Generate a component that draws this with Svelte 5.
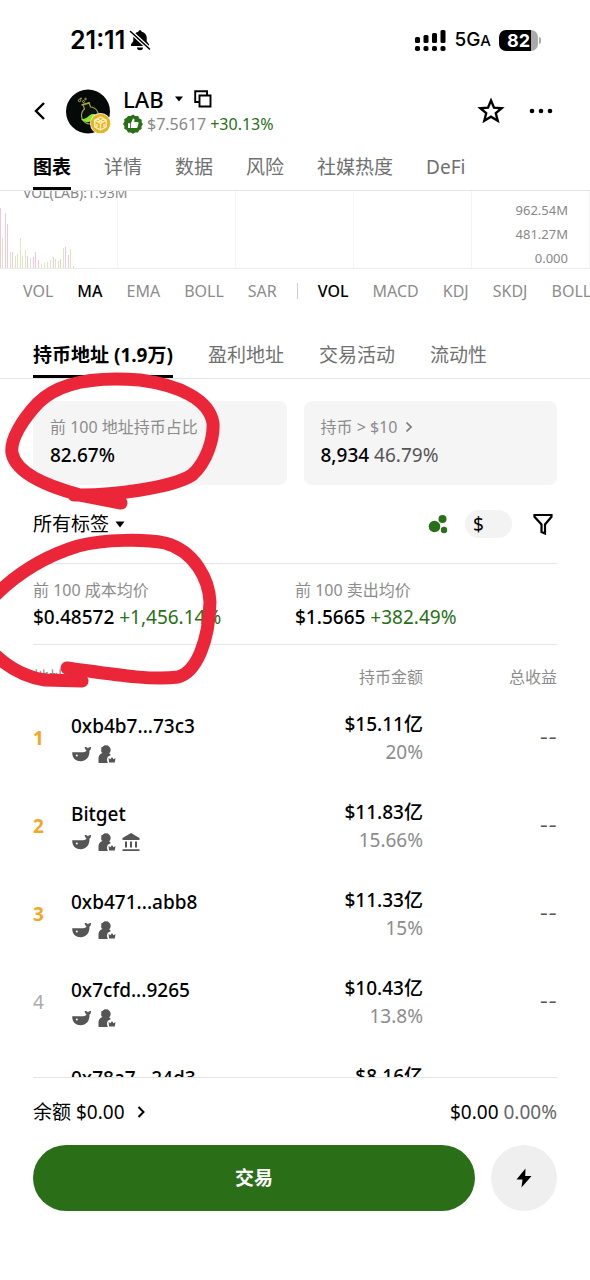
<script lang="ts">
  interface Holder {
    name: string;
    bank?: boolean;
    amount: string;
    share?: string;
  }

  const pageTabs = ["图表", "详情", "数据", "风险", "社媒热度", "DeFi"];
  const mainIndicators = ["VOL", "MA", "EMA", "BOLL", "SAR"];
  const subIndicators = ["VOL", "MACD", "KDJ", "SKDJ", "BOLL"];
  const holderTabs = ["持币地址 (1.9万)", "盈利地址", "交易活动", "流动性"];

  const holders: Holder[] = [
    { name: "0xb4b7...73c3", amount: "$15.11亿", share: "20%" },
    { name: "Bitget", bank: true, amount: "$11.83亿", share: "15.66%" },
    { name: "0xb471...abb8", amount: "$11.33亿", share: "15%" },
    { name: "0x7cfd...9265", amount: "$10.43亿", share: "13.8%" },
    { name: "0x78a7...24d3", amount: "$8.16亿" },
  ];

  // volume bars: [x, height, up]
  const bars: [number, number, boolean][] = [
    [0, 60, false], [2, 30, true], [5, 55, false], [7, 44, false], [10, 16, true],
    [12, 16, false], [15, 12, true], [17, 14, true], [20, 30, true], [22, 12, true],
    [25, 18, true], [27, 12, false], [30, 10, true], [33, 11, false], [35, 16, false],
    [38, 8, false], [41, 4, true], [44, 5, true], [47, 6, true], [50, 8, true],
    [53, 11, false], [55, 9, true], [58, 7, true], [60, 9, false], [63, 20, true],
    [65, 21, false], [68, 13, false], [70, 19, true], [73, 2, false],
  ];

  let pageTab = $state(0);
  let holderTab = $state(0);
  let mainIndicator = $state("MA");
  let subIndicator = $state("VOL");
</script>

<div class="app">
  <div class="status">
    <div class="clock">
      21:11
      <svg width="22" height="22" viewBox="0 0 22 22" aria-hidden="true">
        <path d="M11 1.2c-1 0-1.6.6-1.7 1.5C6.500 3.400 4.300 5.500 4.300 8.500v3.700L2 15.300v1.700h18v-1.700l-2.300-3.100V8.500c0-3-2.200-5.100-5-5.800-.1-.9-.7-1.500-1.700-1.500z" />
        <path d="M8 18.600a3 2.600 0 0 0 6 0z" />
        <path d="M1.500 2.500l19 17.500" stroke="#fff" stroke-width="4" />
        <path d="M1.500 2.500l19 17.500" stroke="#000" stroke-width="1.600" stroke-linecap="round" />
      </svg>
    </div>
    <div class="signal">
      <svg width="31" height="22" viewBox="0 0 31 22" aria-hidden="true">
        <rect x="0" y="8" width="5" height="6" rx="1.500" />
        <rect x="8.500" y="6" width="5" height="8" rx="1.500" />
        <rect x="17" y="4" width="5" height="10" rx="1.500" />
        <rect x="25.500" y="1" width="5" height="13" rx="1.500" />
        <rect x="0" y="17" width="5" height="5" rx="1.800" />
        <rect x="8.500" y="17" width="5" height="5" rx="1.800" />
        <rect x="17" y="17" width="5" height="5" rx="1.800" />
        <rect x="25.500" y="17" width="5" height="5" rx="1.800" />
      </svg>
      <span class="network">5G<small>A</small></span>
      <span class="battery">82</span>
    </div>
  </div>

  <header>
    <button class="back" aria-label="返回">
      <svg width="14" height="20" viewBox="0 0 14 20"><path d="M11 2L3 10l8 8" fill="none" stroke="#000" stroke-width="2.400" /></svg>
    </button>
    <svg class="coin" width="45" height="45" viewBox="0 0 45 45" aria-hidden="true">
      <circle cx="22" cy="22.500" r="22" fill="#050a08" />
      <path d="M17 15.500l1.500 4.500a8.500 8.500 0 1 0 6-2l-1.300-4z" fill="#0b120c" stroke="#a8a63c" stroke-width="1.100" />
      <path d="M15 30c4 .5 6-1.500 8.500-3.500 2.500-1.800 4-1.500 6.200-1a8.300 8.300 0 0 1-14.700 4.500z" fill="#8aea2e" />
      <path d="M15.500 16l8.500-2.300" stroke="#a8a63c" stroke-width="1.500" />
      <g fill="none" stroke="#b6b04a"><circle cx="13.500" cy="11.500" r="1.200" /><circle cx="17.500" cy="12.500" r="1" /><circle cx="15" cy="9.500" r=".6" /><circle cx="19.500" cy="10" r=".8" /></g>
      <circle cx="34.500" cy="34.500" r="10.500" fill="#fff" />
      <circle cx="34.500" cy="34.500" r="9.800" fill="#e6b325" />
      <path d="M34.500 28l5.700 3.200v6.600L34.500 41l-5.700-3.200v-6.600z M29.500 31.500l5 3 5-3 M34.500 34.500v6 M31.500 30l6 3.500 M37.500 30l-6 3.500 M31 35v3 M38 35v3" fill="none" stroke="#fff3c4" stroke-width="1.400" />
    </svg>
    <div class="token">
      <div class="symbol">
        <h1>LAB</h1>
        <svg width="10" height="6" viewBox="0 0 10 6" aria-hidden="true"><path d="M1 .5h8L5 5.500z" /></svg>
        <button aria-label="复制">
          <svg width="18" height="18" viewBox="0 0 18 18"><path d="M5 12H1.200V1.200H13V5M5.500 5.500h11v11h-11z" fill="none" stroke="#000" stroke-width="1.900" /></svg>
        </button>
      </div>
      <div class="price">
        <svg width="20" height="20" viewBox="0 0 20 20" aria-hidden="true">
          <path d="M10 .5l2.300 1.600 2.800-.2 1.200 2.500 2.500 1.300-.2 2.700L20 10l-1.500 2.200.1 2.700-2.400 1.300-1.300 2.400-2.700-.1L10 19.800l-2.300-1.400-2.700.1-1.300-2.400-2.400-1.300.1-2.700L0 10l1.400-2.300-.1-2.700 2.400-1.300L5 1.900l2.700.2z" fill="#287017" />
          <path d="M5 9.200h2.200V14H5z M8 9l2-4.500c1.300 0 1.700.8 1.500 1.800L11.200 8h3.300c.8 0 1.100.6 1 1.200l-.9 3.900c-.2.600-.6.900-1.200.9H8z" fill="#fff" />
        </svg>
        <span>$7.5617</span>
        <span class="up">+30.13%</span>
      </div>
    </div>
    <div class="actions">
      <button aria-label="收藏">
        <svg width="28" height="28" viewBox="0 0 28 28"><path d="M14 3.500l3 7.100 7.700.6-5.900 5 1.900 7.600L14 19.700l-6.700 4.100 1.900-7.600-5.900-5 7.700-.6z" fill="none" stroke="#000" stroke-width="2.400" /></svg>
      </button>
      <button aria-label="更多">
        <svg width="24" height="6" viewBox="0 0 24 6"><circle cx="3" cy="3" r="2.300" /><circle cx="12" cy="3" r="2.300" /><circle cx="21" cy="3" r="2.300" /></svg>
      </button>
    </div>
  </header>

  <nav class="tabs">
    {#each pageTabs as tab, i}
      <button class:active={pageTab === i} onclick={() => (pageTab = i)}>{tab}</button>
    {/each}
  </nav>

  <section class="chart">
    <div class="legend">VOL(LAB):1.93M</div>
    <svg width="80" height="76" viewBox="0 0 80 76" aria-hidden="true">
      {#each bars as [x, height, up]}
        <rect {x} y={76 - height} width="1" {height} fill={up ? "#dbe8bd" : "#f3c6dc"} />
      {/each}
    </svg>
    <div class="axis">
      <span>962.54M</span>
      <span>481.27M</span>
      <span>0.000</span>
    </div>
  </section>

  <div class="indicators">
    {#each mainIndicators as name}
      <button class:active={mainIndicator === name} onclick={() => (mainIndicator = name)}>{name}</button>
    {/each}
    <i></i>
    {#each subIndicators as name}
      <button class:active={subIndicator === name} onclick={() => (subIndicator = name)}>{name}</button>
    {/each}
  </div>

  <nav class="tabs holder-tabs">
    {#each holderTabs as tab, i}
      <button class:active={holderTab === i} onclick={() => (holderTab = i)}>{tab}</button>
    {/each}
  </nav>

  <div class="cards">
    <div class="card">
      <div class="label">前 100 地址持币占比</div>
      <div class="value">82.67%</div>
    </div>
    <div class="card">
      <div class="label">
        持币 &gt; $10
        <svg width="8" height="12" viewBox="0 0 8 12" aria-hidden="true"><path d="M1.500 1.500L6 6l-4.500 4.500" fill="none" stroke="#777" stroke-width="1.700" /></svg>
      </div>
      <div class="value">8,934 <span>46.79%</span></div>
    </div>
  </div>

  <div class="filters">
    <button class="all">
      所有标签
      <svg width="10" height="7" viewBox="0 0 10 7" aria-hidden="true"><path d="M.5.5h9L5 6.500z" /></svg>
    </button>
    <button aria-label="气泡图">
      <svg width="20" height="20" viewBox="0 0 20 20" fill="#287017"><circle cx="6.500" cy="12.500" r="5.800" /><circle cx="14.500" cy="5" r="4" /><circle cx="16" cy="16" r="3.200" /></svg>
    </button>
    <button class="switch" aria-label="货币单位">$</button>
    <button aria-label="筛选">
      <svg width="20" height="22" viewBox="0 0 20 22"><path d="M1.500 2h17v1.800L12 11.500V20.500L8.500 19v-7.500L1.500 3.800z" fill="none" stroke="#000" stroke-width="2.200" /></svg>
    </button>
  </div>

  <div class="averages">
    <div>
      <div class="label">前 100 成本均价</div>
      <div class="value">$0.48572 <span class="up">+1,456.14%</span></div>
    </div>
    <div>
      <div class="label">前 100 卖出均价</div>
      <div class="value">$1.5665 <span class="up">+382.49%</span></div>
    </div>
  </div>

  <main>
    <table>
      <thead>
        <tr>
          <th class="name" colspan="2">地址</th>
          <th>持币金额</th>
          <th class="profit">总收益</th>
        </tr>
      </thead>
      <tbody>
        {#each holders as holder, i}
          <tr>
            <td class="rank" class:top={i < 3}>{i + 1}</td>
            <td class="name">
              <div class="address">{holder.name}</div>
              <div class="badges">
                <svg width="20" height="20" viewBox="0 0 20 20" aria-hidden="true">
                  <path d="M1.200 8.200H12c2 0 3-.8 3.600-2-1.200-.5-1.900-1.500-1.900-3.200 1.600 0 2.700.3 3.300 1.400.7-1.100 1.600-1.600 3-1.500 0 2-.4 3-1.500 3.600.2 5.700-2.500 10.700-9 10.700-5.400 0-8.300-3.500-8.300-9z" />
                  <circle cx="5.800" cy="11.500" r="1" fill="#fff" />
                </svg>
                <svg width="20" height="20" viewBox="0 0 20 20" aria-hidden="true">
                  <circle cx="10" cy="6" r="4.700" />
                  <path d="M5.500 3h4v5l-4 .5z" />
                  <path d="M2.500 19v-4.500c0-3 2-5.500 5-5.500h4c1.500 0 2.700.9 3.300 2.300-2.500.6-3.800 2.200-3.800 4.200 0 1.500.4 2.500 1 3.500z" />
                  <path d="M12.500 14l2 1.300L16 13l1.500 2.300 2-1.300-.7 4.500h-5.600z" />
                </svg>
                {#if holder.bank}
                  <svg width="20" height="20" viewBox="0 0 20 20" aria-hidden="true">
                    <path d="M10 1l8.500 5v2h-17V6z M4 9.500h2v6H4z M9 9.500h2v6H9z M14 9.500h2v6h-2z M1.500 17.300h17V19h-17z" />
                  </svg>
                {/if}
              </div>
            </td>
            <td class="amount">
              <div>{holder.amount}</div>
              <div class="share">{holder.share ?? ""}</div>
            </td>
            <td class="profit">--</td>
          </tr>
        {/each}
      </tbody>
    </table>
  </main>

  <footer>
    <div class="balance">
      <button>
        余额 $0.00
        <svg width="9" height="14" viewBox="0 0 9 14" aria-hidden="true"><path d="M1.500 2L6.500 7l-5 5" fill="none" stroke="#000" stroke-width="2" /></svg>
      </button>
      <div>$0.00 <span>0.00%</span></div>
    </div>
    <div class="trade">
      <button class="primary">交易</button>
      <button class="flash" aria-label="闪电交易">
        <svg width="18" height="20" viewBox="0 0 18 20"><path d="M10.500.5L1.500 11.500h6L6.500 19.500l10-11.500h-6.300z" /></svg>
      </button>
    </div>
  </footer>

  <!-- hand-drawn marker rings -->
  <svg class="marker" width="590" height="1280" viewBox="0 0 590 1280" aria-hidden="true">
    <path d="M74 495C110 496 172 488 192 475C207 462 214 438 213 423C209 399 178 385 140 380C92 376 58 383 38 403C22 420 10 440 12 453C16 474 50 487 80 495L121 503" />
    <path d="M-14 605C10 578 42 557 78 546C105 539 145 539 165 543C195 551 209 580 210 602C209 640 197 672 178 677C150 681 105 673 67 668" />
    <path d="M-14 645C2 664 20 676 45 680L82 681" />
  </svg>
</div>

<style>
  .app {
    position: relative;
    display: flex;
    flex-direction: column;
    height: 100vh;
    overflow: hidden;
    background: #fff;
    color: #000;
    font-family: "Noto Sans", "Noto Sans CJK SC", sans-serif;
    font-size: 19px;
    line-height: 28px;
  }
  button {
    padding: 0;
    border: 0;
    background: none;
    color: inherit;
    font: inherit;
    white-space: nowrap;
    cursor: pointer;
  }
  svg {
    display: block;
    flex: none;
  }
  .up {
    color: #287017;
  }

  .status {
    display: flex;
    flex: none;
    align-items: center;
    justify-content: space-between;
    height: 80px;
    padding: 0 52px 0 70px;
    font-family: Inter, sans-serif;
    font-weight: 600;
  }
  .clock,
  .signal {
    display: flex;
    align-items: center;
  }
  .clock {
    gap: 4px;
    font-size: 25px;
  }
  .signal {
    gap: 8px;
  }
  .network {
    font-weight: 500;
  }
  .network small {
    font-size: 15px;
  }
  .battery {
    position: relative;
    width: 39px;
    border-radius: 7px;
    background: linear-gradient(to right, #000 82%, #aaa 82%);
    color: #fff;
    font-size: 18px;
    font-weight: 700;
    line-height: 21px;
    text-align: center;
  }
  .battery::after {
    content: "";
    position: absolute;
    top: 7px;
    right: -3px;
    width: 2px;
    height: 7px;
    border-radius: 0 2px 2px 0;
    background: #aaa;
  }

  header {
    display: flex;
    flex: none;
    align-items: center;
    height: 62px;
    padding: 0 37px 0 33px;
  }
  .coin {
    margin: 0 12px 0 19px;
  }
  .symbol,
  .price,
  .actions {
    display: flex;
    align-items: center;
  }
  .symbol {
    gap: 10px;
    height: 26px;
  }
  h1 {
    margin: 0;
    font-size: 22px;
    font-weight: 500;
  }
  .price {
    gap: 4px;
    height: 24px;
    color: #888;
    font-size: 16px;
  }
  .price .up {
    color: #287017;
  }
  .actions {
    gap: 24px;
    margin-left: auto;
  }

  .tabs {
    display: flex;
    flex: none;
    gap: 33px;
    height: 48px;
    padding: 0 33px;
    border-bottom: 1px solid #e5e5e5;
    color: #707070;
  }
  .tabs button {
    padding-top: 4px;
    border-bottom: 3px solid transparent;
  }
  .tabs .active {
    border-color: #000;
    color: #000;
    font-weight: 700;
  }

  .chart {
    position: relative;
    display: flex;
    flex: none;
    align-items: flex-end;
    justify-content: space-between;
    height: 77px;
    border-bottom: 1px solid #ececec;
    overflow: hidden;
    background: repeating-linear-gradient(to right, transparent 0 117px, #f4f4f4 117px 118px);
    color: #888;
    font-size: 14px;
  }
  .legend {
    position: absolute;
    top: -12px;
    left: 23px;
  }
  .axis {
    display: flex;
    flex-direction: column;
    align-self: flex-start;
    padding: 7px 22px 0 0;
    font-size: 13px;
    line-height: 24px;
    text-align: right;
  }

  .indicators {
    display: flex;
    flex: none;
    align-items: center;
    gap: 24px;
    height: 44px;
    padding-left: 23px;
    overflow: hidden;
    color: #8c8c8c;
    font-size: 16px;
  }
  .indicators .active {
    color: #000;
    font-weight: 500;
  }
  .indicators i {
    flex: none;
    width: 1px;
    height: 16px;
    margin: 0 -4px;
    background: #ccc;
  }
  .holder-tabs {
    gap: 35px;
    margin-top: 17px;
  }

  .cards {
    display: flex;
    flex: none;
    gap: 17px;
    padding: 22px 33px 0;
  }
  .card {
    flex: 1;
    padding: 12px 17px 16px;
    border-radius: 8px;
    background: #f5f5f5;
  }
  .label {
    display: flex;
    align-items: center;
    gap: 8px;
    color: #8c8c8c;
    font-size: 16px;
  }
  .value {
    font-weight: 500;
    white-space: nowrap;
  }
  .value span {
    color: #555;
    font-weight: 400;
  }
  .value .up {
    color: #287017;
  }

  .filters {
    display: flex;
    flex: none;
    align-items: center;
    gap: 17px;
    height: 78px;
    padding: 0 37px 0 33px;
  }
  .all {
    display: flex;
    align-items: center;
    gap: 6px;
    margin-right: auto;
  }
  .switch {
    width: 47px;
    padding-left: 8px;
    border-radius: 14px;
    background: #f3f3f3;
    text-align: left;
  }
  .filters button:last-child {
    margin-left: 4px;
  }

  .averages {
    display: grid;
    flex: none;
    grid-template-columns: 1fr 1fr;
    margin: 0 33px;
    padding: 12px 0 14px;
    border: solid #e5e5e5;
    border-width: 1px 0;
  }
  .averages .value {
    line-height: 26px;
  }

  main {
    flex: 1;
    min-height: 0;
    padding: 0 33px;
    overflow: hidden;
  }
  table {
    width: 100%;
    border-collapse: collapse;
  }
  th,
  td {
    padding: 0;
    text-align: right;
  }
  th {
    box-sizing: border-box;
    height: 49px;
    padding-top: 20px;
    color: #8c8c8c;
    font-size: 16px;
    font-weight: 400;
    line-height: 24px;
    vertical-align: top;
  }
  td {
    box-sizing: border-box;
    height: 88px;
  }
  .name {
    text-align: left;
  }
  td.name {
    padding-top: 4px;
  }
  .rank {
    width: 38px;
    color: #aaa;
    text-align: left;
  }
  .rank.top {
    color: #f5a623;
    font-weight: 700;
  }
  .address,
  .amount {
    font-weight: 500;
  }
  .badges {
    display: flex;
    gap: 5px;
    height: 28px;
    align-items: center;
    fill: #555;
  }
  .share {
    min-height: 28px;
    color: #8c8c8c;
    font-weight: 400;
  }
  .profit {
    width: 134px;
  }
  td.profit {
    color: #555;
    font-family: Inter, sans-serif;
  }

  footer {
    flex: none;
    margin: 0 33px;
    padding-bottom: 69px;
    border-top: 1px solid #e5e5e5;
  }
  .balance {
    display: flex;
    align-items: center;
    justify-content: space-between;
    height: 67px;
  }
  .balance button {
    display: flex;
    align-items: center;
    gap: 12px;
  }
  .balance span {
    color: #666;
  }
  .trade {
    display: flex;
    gap: 16px;
  }
  .trade button {
    height: 66px;
    border-radius: 33px;
  }
  .trade .primary {
    flex: 1;
    background: #2a6e18;
    color: #fff;
    font-weight: 700;
  }
  .trade .flash {
    display: grid;
    place-items: center;
    width: 66px;
    background: #efefef;
  }

  .marker {
    position: absolute;
    top: 0;
    left: 0;
    fill: none;
    stroke: #eb2639;
    stroke-width: 13;
    stroke-linecap: round;
    stroke-linejoin: round;
    pointer-events: none;
  }
</style>
